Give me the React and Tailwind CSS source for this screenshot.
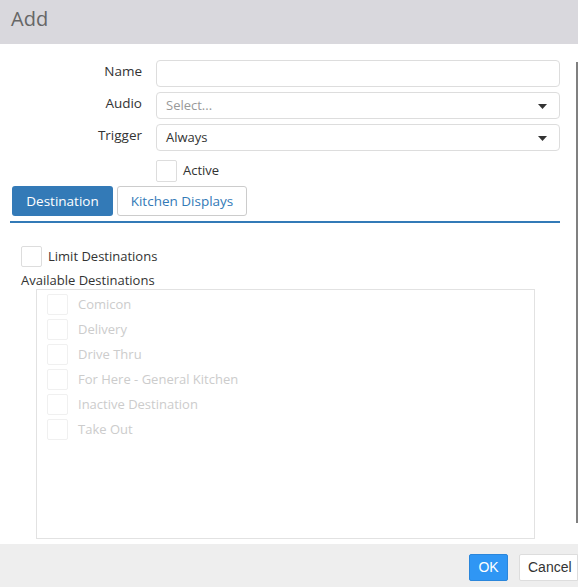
import React from "react";

const destinations = [
  "Comicon",
  "Delivery",
  "Drive Thru",
  "For Here - General Kitchen",
  "Inactive Destination",
  "Take Out",
];

const Caret = () => (
  <svg width="9" height="5" viewBox="0 0 9 5" className="absolute right-[12px] top-[11px]">
    <path d="M0 0h9L4.5 5z" fill="#333" />
  </svg>
);

const App = () => {
  return (
    <div className="w-[578px] h-[587px] flex flex-col bg-white font-['Open_Sans',sans-serif] text-[13px] text-[#333] overflow-hidden">
      {/* header */}
      <div className="h-[44px] bg-[#d9d8dd] pl-[11px] flex items-center shrink-0">
        <span className="text-[20px] text-[#666] leading-none -mt-[6px]">Add</span>
      </div>

      {/* body */}
      <div className="flex-1 flex relative">
        <div className="flex-1 pl-[10px] pr-[18px] pt-[16px]">
          <div className="grid grid-cols-[132px_1fr] gap-x-[14px] gap-y-[5px]">
            <label className="text-right text-[13.5px] pt-[1px]">Name</label>
            <div className="h-[27px] border border-[#ddd] rounded-[4px]" />
            <label className="text-right text-[13.5px] pt-[1px]">Audio</label>
            <div className="h-[27px] border border-[#ddd] rounded-[4px] relative flex items-center pl-[9px] text-[#999]">
              Select...
              <Caret />
            </div>
            <label className="text-right text-[13.5px] pt-[1px]">Trigger</label>
            <div className="h-[27px] border border-[#ddd] rounded-[4px] relative flex items-center pl-[9px]">
              Always
              <Caret />
            </div>
            <div />
            <div className="flex items-center gap-[6px] mt-[4px]">
              <span className="w-[21px] h-[22px] border border-[#ddd] rounded-[2px]" />
              <span>Active</span>
            </div>
          </div>

          {/* tabs */}
          <div className="flex gap-[4px] mt-[4px] border-b-[2px] border-[#337ab7] pb-[5px]">
            <div className="ml-[2px] w-[101px] h-[30px] bg-[#337ab7] text-white text-[13.5px] rounded-[3px] flex items-center justify-center">
              Destination
            </div>
            <div className="w-[130px] h-[30px] border border-[#ccc] text-[#337ab7] text-[13.5px] rounded-[3px] flex items-center justify-center">
              Kitchen Displays
            </div>
          </div>

          <div className="pl-[11px] pt-[23px]">
            <div className="flex items-center gap-[6px]">
              <span className="w-[21px] h-[21px] border border-[#ddd] rounded-[2px]" />
              <span>Limit Destinations</span>
            </div>
            <div className="mt-[4px] leading-[18px]">Available Destinations</div>
            <div className="ml-[15px] w-[499px] h-[250px] border border-[#e2e2e2] pl-[10px] pt-[2px]">
              {destinations.map((d) => (
                <div key={d} className="flex items-center gap-[10px] h-[25px] text-[#ccc]">
                  <span className="w-[21px] h-[21px] border border-[#f0f0f0] rounded-[2px]" />
                  <span>{d}</span>
                </div>
              ))}
            </div>
          </div>
        </div>
        {/* scrollbar */}
        <div className="absolute right-0 top-[18px] w-[2px] h-[461px] bg-[#808080]" />
      </div>

      {/* footer */}
      <div className="h-[43px] bg-[#eeeeee] shrink-0 flex items-start justify-end gap-[11px] pt-[10px] font-['Liberation_Sans',sans-serif] text-[14px]">
        <button className="w-[39px] h-[27px] bg-[#2f96f4] border border-[#2a86db] text-white rounded-[2px]">
          OK
        </button>
        <button className="w-[59px] h-[27px] bg-white border border-[#ddd] rounded-l-[2px] text-[#333] pl-[8px] text-left">
          Cancel
        </button>
      </div>
    </div>
  );
};

export default App;
